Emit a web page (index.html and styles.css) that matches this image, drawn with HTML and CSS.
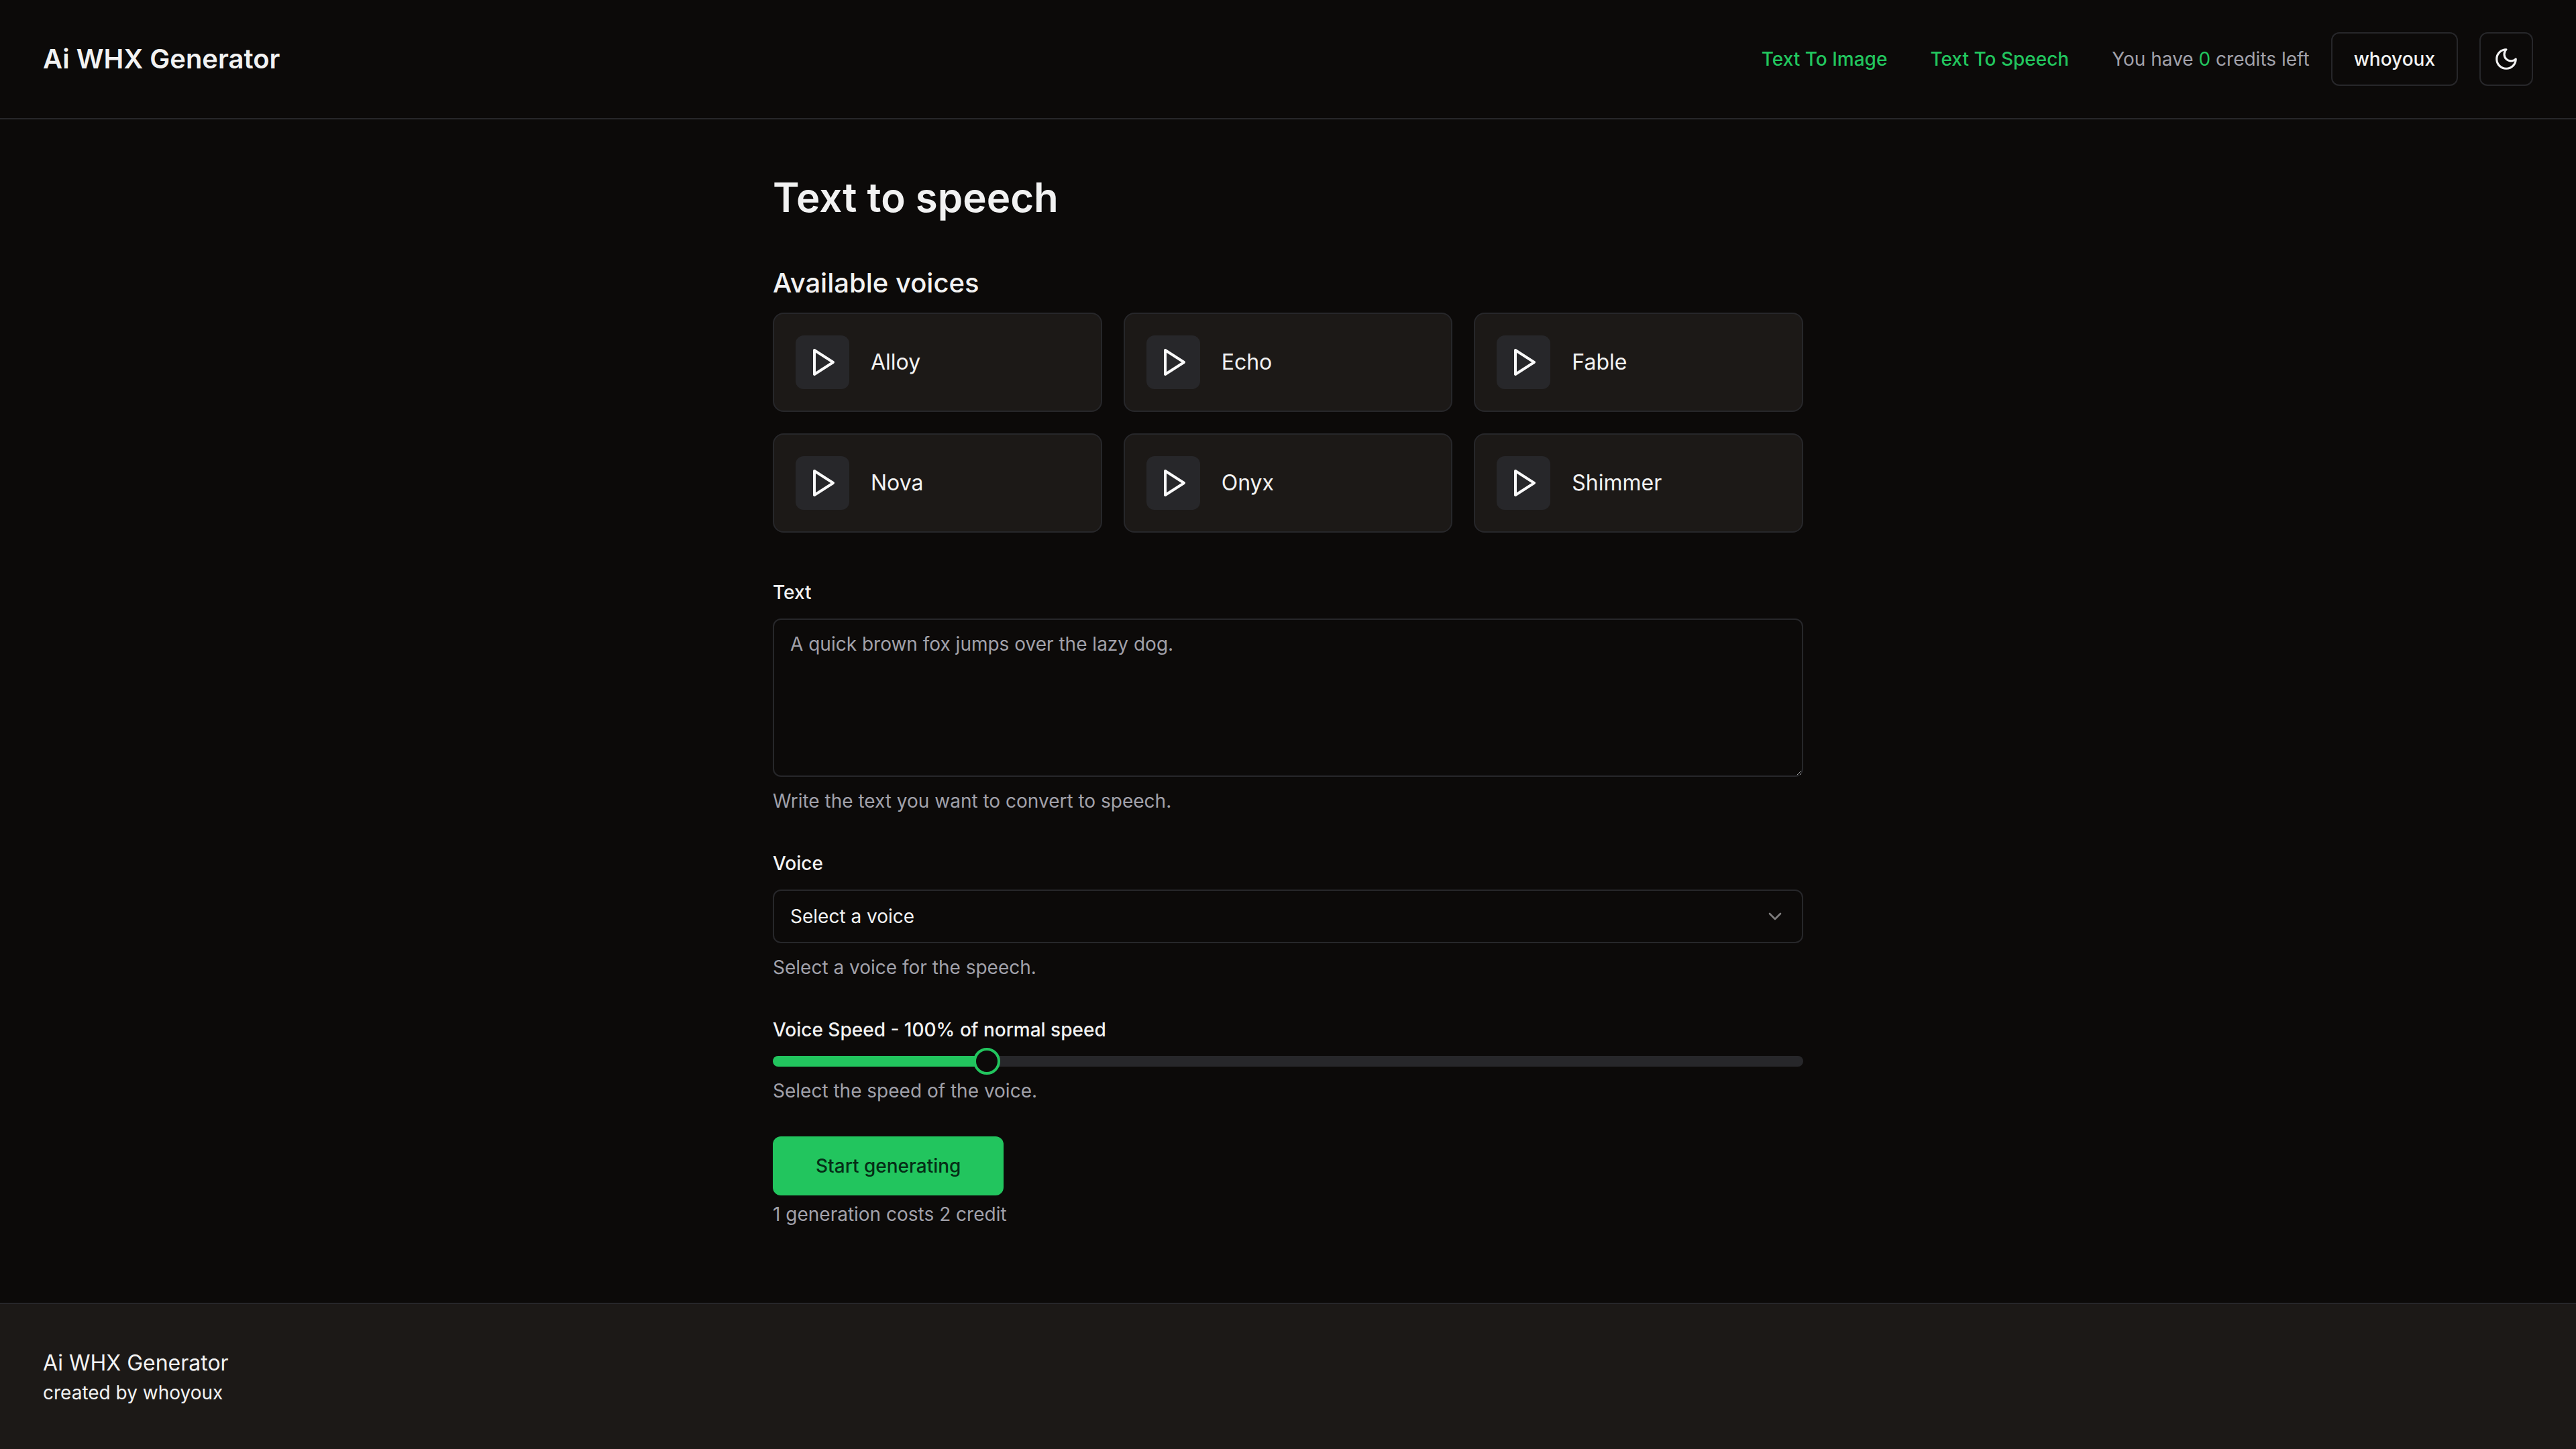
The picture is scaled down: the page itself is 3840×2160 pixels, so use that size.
FILE: index.html
```
<!DOCTYPE html>
<html lang="en">
<head>
  <meta charset="utf-8">
  <meta name="viewport" content="width=device-width, initial-scale=1">
  <title>Ai WHX Generator</title>
  <link rel="stylesheet" href="styles.css">
</head>
<body>
  <svg class="sprite" aria-hidden="true">
    <symbol id="play" viewBox="0 0 24 24"><polygon points="5 3 19 12 5 21 5 3"/></symbol>
  </svg>

  <header class="header">
    <a class="brand" href="#">Ai WHX Generator</a>
    <div class="header-side">
      <nav class="nav">
        <a class="nav-link" href="#">Text To Image</a>
        <a class="nav-link" href="#">Text To Speech</a>
      </nav>
      <div class="account">
        <p class="note">You have <span class="credits">0</span> credits left</p>
        <button class="btn btn-outline" type="button">whoyoux</button>
        <button class="btn btn-outline btn-icon" type="button" aria-label="Toggle theme">
          <svg class="icon icon-moon" viewBox="0 0 24 24"><path d="M12 3a6 6 0 0 0 9 9 9 9 0 1 1-9-9Z"/></svg>
        </button>
      </div>
    </div>
  </header>

  <main class="main">
    <h1 class="title">Text to speech</h1>

    <section class="voices">
      <h2 class="subtitle">Available voices</h2>
      <ul class="voice-grid">
        <li class="voice"><button class="btn btn-icon btn-play" type="button" aria-label="Play Alloy"><svg class="icon icon-play"><use href="#play"/></svg></button><span>Alloy</span></li>
        <li class="voice"><button class="btn btn-icon btn-play" type="button" aria-label="Play Echo"><svg class="icon icon-play"><use href="#play"/></svg></button><span>Echo</span></li>
        <li class="voice"><button class="btn btn-icon btn-play" type="button" aria-label="Play Fable"><svg class="icon icon-play"><use href="#play"/></svg></button><span>Fable</span></li>
        <li class="voice"><button class="btn btn-icon btn-play" type="button" aria-label="Play Nova"><svg class="icon icon-play"><use href="#play"/></svg></button><span>Nova</span></li>
        <li class="voice"><button class="btn btn-icon btn-play" type="button" aria-label="Play Onyx"><svg class="icon icon-play"><use href="#play"/></svg></button><span>Onyx</span></li>
        <li class="voice"><button class="btn btn-icon btn-play" type="button" aria-label="Play Shimmer"><svg class="icon icon-play"><use href="#play"/></svg></button><span>Shimmer</span></li>
      </ul>
    </section>

    <form class="form">
      <div class="field">
        <div><label class="label" for="text">Text</label></div>
        <textarea class="control textarea" id="text" rows="5" placeholder="A quick brown fox jumps over the lazy dog."></textarea>
        <p class="note">Write the text you want to convert to speech.</p>
      </div>

      <div class="field">
        <div><label class="label" for="voice">Voice</label></div>
        <div class="select-wrap">
          <select class="control select" id="voice">
            <option>Select a voice</option>
            <option>Alloy</option>
            <option>Echo</option>
            <option>Fable</option>
            <option>Nova</option>
            <option>Onyx</option>
            <option>Shimmer</option>
          </select>
          <svg class="icon icon-chevron" viewBox="0 0 24 24"><path d="m6 9 6 6 6-6"/></svg>
        </div>
        <p class="note">Select a voice for the speech.</p>
      </div>

      <div class="field">
        <div><label class="label" for="speed">Voice Speed - 100% of normal speed</label></div>
        <input class="slider" id="speed" type="range" min="0.25" max="4" step="0.25" value="1" style="--fill: 20%">
        <p class="note">Select the speed of the voice.</p>
      </div>

      <div class="submit">
        <button class="btn btn-primary" type="button">Start generating</button>
        <p class="note">1 generation costs 2 credit</p>
      </div>
    </form>
  </main>

  <footer class="footer">
    <p>Ai WHX Generator</p>
    <p class="footer-credit">created by whoyoux</p>
  </footer>
</body>
</html>
```
FILE: styles.css
```
:root {
  --bg: #0c0a09;
  --card: #1c1917;
  --border: #27272a;
  --text: #f2f2f2;
  --muted: #a1a1aa;
  --green: #22c55e;
  --green-dark: #052e16;
}

*,
*::before,
*::after {
  box-sizing: border-box;
}

body {
  display: flex;
  flex-direction: column;
  min-height: 100vh;
  margin: 0;
  background: var(--bg);
  color: var(--text);
  font-family: Inter, "Liberation Sans", sans-serif;
  font-size: 32px;
  line-height: 48px;
}

h1,
h2,
p,
ul {
  margin: 0;
  padding: 0;
}

a {
  color: inherit;
  text-decoration: none;
}

.sprite {
  display: none;
}

.icon {
  flex: none;
  fill: none;
  stroke: currentColor;
  stroke-width: 2;
  stroke-linecap: round;
  stroke-linejoin: round;
}

/* Header */

.header {
  display: flex;
  align-items: center;
  justify-content: space-between;
  padding: 48px 64px;
  border-bottom: 2px solid var(--border);
}

.brand {
  font-size: 40px;
  font-weight: 600;
  line-height: 56px;
}

.header-side,
.nav {
  display: flex;
  align-items: center;
  gap: 64px;
}

.nav-link {
  color: var(--green);
  font-size: 28px;
  font-weight: 500;
  line-height: 40px;
}

.account {
  display: flex;
  align-items: center;
  gap: 32px;
}

.note {
  color: var(--muted);
  font-size: 28px;
  line-height: 40px;
}

.credits {
  color: var(--green);
}

/* Buttons */

.btn {
  display: inline-flex;
  align-items: center;
  justify-content: center;
  height: 80px;
  padding: 0 32px;
  border: 0;
  border-radius: 12px;
  font-family: inherit;
  font-size: 28px;
  font-weight: 500;
  line-height: 40px;
  color: var(--text);
  cursor: pointer;
}

.btn-outline {
  border: 2px solid var(--border);
  background: var(--bg);
}

.btn-icon {
  width: 80px;
  padding: 0;
}

.btn-play {
  padding-left: 4px;
  background: var(--border);
  color: #fafafa;
}

.btn-primary {
  height: 88px;
  padding: 0 64px;
  background: var(--green);
  color: var(--green-dark);
}

.icon-moon {
  width: 38px;
  height: 38px;
}

.icon-play {
  width: 48px;
  height: 48px;
}

/* Main column */

.main {
  flex: 1;
  display: flex;
  flex-direction: column;
  gap: 64px;
  width: 100%;
  max-width: 1536px;
  margin: 0 auto;
  padding: 80px 0 112px;
}

.title {
  font-size: 60px;
  font-weight: 600;
  line-height: 72px;
}

.voices {
  display: flex;
  flex-direction: column;
  gap: 16px;
}

.subtitle {
  font-size: 40px;
  font-weight: 500;
  line-height: 56px;
}

.voice-grid {
  display: grid;
  grid-template-columns: repeat(3, 1fr);
  gap: 32px;
  list-style: none;
}

.voice {
  display: flex;
  align-items: center;
  gap: 32px;
  padding: 32px;
  border: 2px solid var(--border);
  border-radius: 16px;
  background: var(--card);
}

/* Form */

.form {
  display: flex;
  flex-direction: column;
  gap: 48px;
}

.field {
  display: flex;
  flex-direction: column;
  gap: 16px;
}

.label {
  font-size: 28px;
  font-weight: 500;
  line-height: 28px;
}

.control {
  display: block;
  width: 100%;
  margin: 0;
  border: 2px solid var(--border);
  border-radius: 12px;
  background: var(--bg);
  color: var(--text);
  font-family: inherit;
  font-size: 28px;
  line-height: 40px;
}

.textarea {
  padding: 16px 24px;
  resize: vertical;
}

.textarea::placeholder {
  color: var(--muted);
}

.select-wrap {
  display: grid;
  align-items: center;
}

.select-wrap > * {
  grid-area: 1 / 1;
}

.select {
  height: 80px;
  padding: 0 24px;
  appearance: none;
}

.icon-chevron {
  justify-self: end;
  width: 32px;
  height: 32px;
  margin-right: 26px;
  opacity: 0.5;
  pointer-events: none;
}

.slider {
  display: block;
  width: 100%;
  height: 16px;
  margin: 0;
  border-radius: 8px;
  background: linear-gradient(to right, var(--green) var(--fill), var(--border) var(--fill));
  appearance: none;
}

.slider::-webkit-slider-runnable-track {
  height: 16px;
}

.slider::-webkit-slider-thumb {
  width: 40px;
  height: 40px;
  margin-top: -12px;
  border: 4px solid var(--green);
  border-radius: 50%;
  background: var(--bg);
  appearance: none;
}

.submit {
  display: flex;
  flex-direction: column;
  align-items: flex-start;
  gap: 8px;
}

/* Footer */

.footer {
  padding: 64px;
  border-top: 2px solid var(--border);
  background: var(--card);
}

.footer-credit {
  font-size: 28px;
  line-height: 40px;
}
```
